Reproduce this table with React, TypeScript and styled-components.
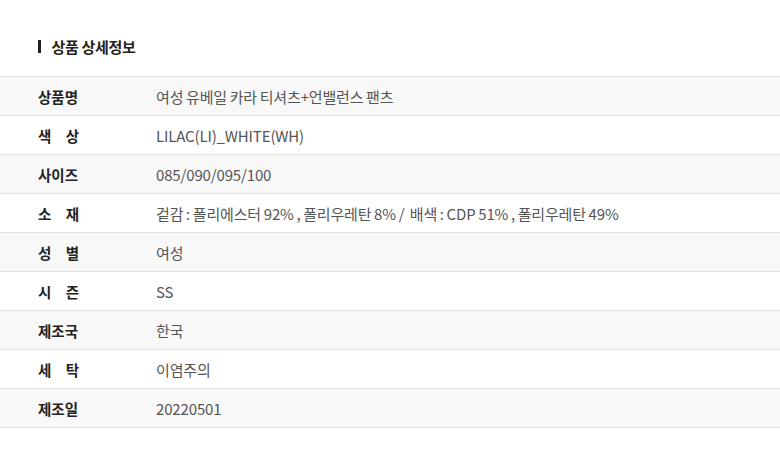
import React from "react";
import styled, { createGlobalStyle } from "styled-components";

const GlobalStyle = createGlobalStyle`
  body {
    margin: 0;
    background: #fff;
    font-family: "Noto Sans CJK KR", "Noto Sans", sans-serif;
  }
`;

const Page = styled.div`
  width: 780px;
  height: 466px;
  overflow: hidden;
  padding-top: 35px;
  box-sizing: border-box;
`;

const Title = styled.h3`
  display: flex;
  align-items: center;
  gap: 11px;
  margin: 0 0 19px 38px;
  height: 22px;
  font-size: 15px;
  font-weight: 700;
  color: #222;
  letter-spacing: -0.3px;

  &::before {
    content: "";
    width: 2.5px;
    height: 13px;
    background: #222;
  }
`;

const Table = styled.div`
  border-top: 1px solid #e2e2e2;
`;

const Row = styled.div<{ $shade: boolean }>`
  display: grid;
  grid-template-columns: 156px 1fr;
  align-items: center;
  height: 38px;
  border-bottom: 1px solid #e2e2e2;
  background: ${(p) => (p.$shade ? "#f8f8f8" : "#fff")};
`;

const Label = styled.span`
  margin-left: 38px;
  width: 41px;
  font-size: 14.5px;
  font-weight: 700;
  color: #222;
  text-align: justify;
  text-align-last: justify;
`;

const Value = styled.span`
  font-size: 15px;
  color: #555;
  letter-spacing: -0.15px;
  word-spacing: -0.5px;
  white-space: pre;
`;

const rows: [string, string][] = [
  ["상품명", "여성 유베일 카라 티셔츠+언밸런스 팬츠"],
  ["색 상", "LILAC(LI)_WHITE(WH)"],
  ["사이즈", "085/090/095/100"],
  ["소 재", "겉감 : 폴리에스터 92% , 폴리우레탄 8% /  배색 : CDP 51% , 폴리우레탄 49%"],
  ["성 별", "여성"],
  ["시 즌", "SS"],
  ["제조국", "한국"],
  ["세 탁", "이염주의"],
  ["제조일", "20220501"],
];

export default function App() {
  return (
    <>
      <GlobalStyle />
      <Page>
        <Title>상품 상세정보</Title>
        <Table>
          {rows.map(([label, value], i) => (
            <Row key={label} $shade={i % 2 === 0}>
              <Label>{label}</Label>
              <Value>{value}</Value>
            </Row>
          ))}
        </Table>
      </Page>
    </>
  );
}
